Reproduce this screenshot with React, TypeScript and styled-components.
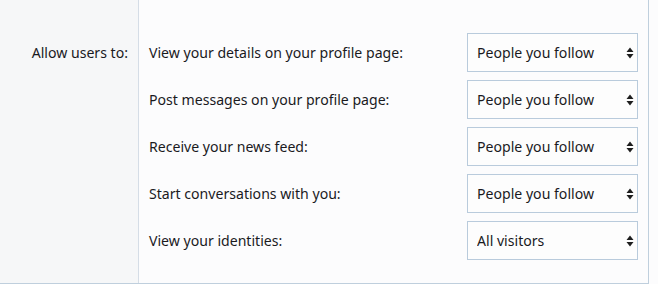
import { createGlobalStyle } from 'styled-components';
import styled from 'styled-components';

const GlobalStyle = createGlobalStyle`
  html, body {
    margin: 0;
    padding: 0;
    background: #fcfcfd;
  }
  body {
    font-family: "Noto Sans", "Open Sans", sans-serif;
    color: #1a1a1e;
  }
`;

const Panel = styled.div`
  display: grid;
  grid-template-columns: 139px 1fr;
  width: 648px;
  height: 283px;
  border-right: 1px solid #bfcfdd;
  border-bottom: 1px solid #bfcfdd;
`;

const LabelCol = styled.div`
  background: #f6f7f8;
  border-right: 1px solid #d5dde6;
  padding: 33px 10px 0 0;
  text-align: right;
`;

const MainLabel = styled.div`
  font-size: 14.1px;
  line-height: 39px;
`;

const Rows = styled.div`
  display: flex;
  flex-direction: column;
  gap: 8px;
  padding: 33px 10px 23px 10px;
  background: #fcfcfd;
`;

const Row = styled.div`
  display: flex;
  align-items: center;
  justify-content: space-between;
  height: 39px;
`;

const RowLabel = styled.label`
  font-size: 14.1px;
`;

const SelectWrap = styled.div`
  position: relative;
  width: 171px;
  height: 39px;
`;

const Select = styled.select`
  appearance: none;
  width: 100%;
  height: 100%;
  box-sizing: border-box;
  border: 1px solid #b9cbdc;
  border-radius: 0;
  background: #fdfdfd;
  font-family: "Noto Sans", "Open Sans", sans-serif;
  font-size: 14.1px;
  color: #1a1a1e;
  padding: 0 24px 0 9px;
  outline: none;
`;

const Arrow = styled.svg`
  position: absolute;
  right: 4px;
  top: 50%;
  transform: translateY(-50%);
  pointer-events: none;
`;

const rows = [
  { label: 'View your details on your profile page:', value: 'People you follow' },
  { label: 'Post messages on your profile page:', value: 'People you follow' },
  { label: 'Receive your news feed:', value: 'People you follow' },
  { label: 'Start conversations with you:', value: 'People you follow' },
  { label: 'View your identities:', value: 'All visitors' },
];

const options = ['All visitors', 'Members only', 'People you follow', 'Nobody'];

const App: React.FC = () => {
  return (
    <>
      <GlobalStyle />
      <Panel>
        <LabelCol>
          <MainLabel>Allow users to:</MainLabel>
        </LabelCol>
        <Rows>
          {rows.map((r) => (
            <Row key={r.label}>
              <RowLabel>{r.label}</RowLabel>
              <SelectWrap>
                <Select defaultValue={r.value}>
                  {options.map((o) => (
                    <option key={o}>{o}</option>
                  ))}
                </Select>
                <Arrow width="8" height="12" viewBox="0 0 8 12">
                  <path d="M4 0.5 L7.5 5 L0.5 5 Z M0.5 7 L7.5 7 L4 11.5 Z" fill="#1e1e1e" />
                </Arrow>
              </SelectWrap>
            </Row>
          ))}
        </Rows>
      </Panel>
    </>
  );
};

export default App;
